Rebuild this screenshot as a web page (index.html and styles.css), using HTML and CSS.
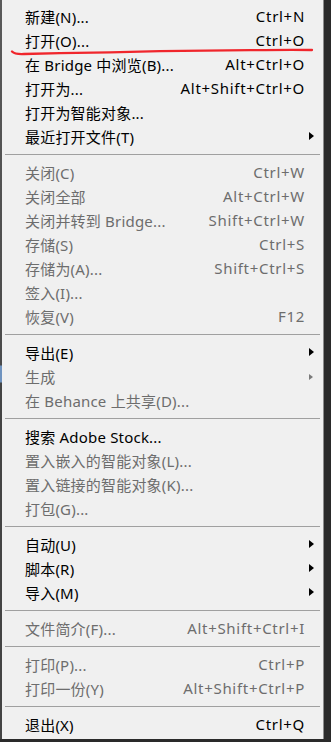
FILE: index.html
```html
<!DOCTYPE html>
<html lang="zh-CN">
<head>
<meta charset="utf-8">
<title>文件菜单</title>
<link rel="stylesheet" href="styles.css">
</head>
<body>
<div class="screen">
  <div class="edge-left"></div>
  <div class="menu">
    <div class="row"><span class="label">新建(N)...</span><span class="key">Ctrl+N</span><span class="sub"></span></div>
    <div class="row"><span class="label">打开(O)...</span><span class="key">Ctrl+O</span><span class="sub"></span></div>
    <div class="row"><span class="label">在 Bridge 中浏览(B)...</span><span class="key">Alt+Ctrl+O</span><span class="sub"></span></div>
    <div class="row"><span class="label">打开为...</span><span class="key">Alt+Shift+Ctrl+O</span><span class="sub"></span></div>
    <div class="row"><span class="label">打开为智能对象...</span><span class="key"></span><span class="sub"></span></div>
    <div class="row"><span class="label">最近打开文件(T)</span><span class="key"></span><span class="sub"><i class="arrow"></i></span></div>
    <div class="sep"></div>
    <div class="row off"><span class="label">关闭(C)</span><span class="key">Ctrl+W</span><span class="sub"></span></div>
    <div class="row off"><span class="label">关闭全部</span><span class="key">Alt+Ctrl+W</span><span class="sub"></span></div>
    <div class="row off"><span class="label">关闭并转到 Bridge...</span><span class="key">Shift+Ctrl+W</span><span class="sub"></span></div>
    <div class="row off"><span class="label">存储(S)</span><span class="key">Ctrl+S</span><span class="sub"></span></div>
    <div class="row off"><span class="label">存储为(A)...</span><span class="key">Shift+Ctrl+S</span><span class="sub"></span></div>
    <div class="row off"><span class="label">签入(I)...</span><span class="key"></span><span class="sub"></span></div>
    <div class="row off"><span class="label">恢复(V)</span><span class="key">F12</span><span class="sub"></span></div>
    <div class="sep"></div>
    <div class="row"><span class="label">导出(E)</span><span class="key"></span><span class="sub"><i class="arrow"></i></span></div>
    <div class="row off"><span class="label">生成</span><span class="key"></span><span class="sub"><i class="arrow small"></i></span></div>
    <div class="row off"><span class="label">在 Behance 上共享(D)...</span><span class="key"></span><span class="sub"></span></div>
    <div class="sep"></div>
    <div class="row"><span class="label">搜索 Adobe Stock...</span><span class="key"></span><span class="sub"></span></div>
    <div class="row off"><span class="label">置入嵌入的智能对象(L)...</span><span class="key"></span><span class="sub"></span></div>
    <div class="row off"><span class="label">置入链接的智能对象(K)...</span><span class="key"></span><span class="sub"></span></div>
    <div class="row off"><span class="label">打包(G)...</span><span class="key"></span><span class="sub"></span></div>
    <div class="sep"></div>
    <div class="row"><span class="label">自动(U)</span><span class="key"></span><span class="sub"><i class="arrow"></i></span></div>
    <div class="row"><span class="label">脚本(R)</span><span class="key"></span><span class="sub"><i class="arrow"></i></span></div>
    <div class="row"><span class="label">导入(M)</span><span class="key"></span><span class="sub"><i class="arrow"></i></span></div>
    <div class="sep"></div>
    <div class="row off"><span class="label">文件简介(F)...</span><span class="key">Alt+Shift+Ctrl+I</span><span class="sub"></span></div>
    <div class="sep"></div>
    <div class="row off"><span class="label">打印(P)...</span><span class="key">Ctrl+P</span><span class="sub"></span></div>
    <div class="row off"><span class="label">打印一份(Y)</span><span class="key">Alt+Shift+Ctrl+P</span><span class="sub"></span></div>
    <div class="sep"></div>
    <div class="row"><span class="label">退出(X)</span><span class="key">Ctrl+Q</span><span class="sub"></span></div>
  </div>
</div>
<svg class="mark" width="331" height="742" viewBox="0 0 331 742" aria-hidden="true">
  <path d="M12 51.5 Q15 54.5 24 54 L60 53.2 Q110 52.6 160 51.2 L250 50.2 Q290 49.6 312 50" fill="none" stroke="#f0262c" stroke-width="2.3" stroke-linecap="round"/>
</svg>
</body>
</html>
```

FILE: styles.css
```css
html, body {
  margin: 0;
  padding: 0;
}
body {
  width: 331px;
  height: 742px;
  overflow: hidden;
  background: #2a2a2a;
  font-family: "Noto Sans", "Noto Sans CJK SC", sans-serif;
  font-size: 15px;
  position: relative;
}
.screen {
  display: flex;
  align-items: flex-start;
  height: 742px;
}
.edge-left {
  width: 2px;
  height: 739px;
  background: linear-gradient(#5a5a5a 0, #4a4a4a 365px, #6f93bf 366px, #6f93bf 382px, #444 383px);
}
.menu {
  width: 322px;
  height: 739px;
  box-sizing: border-box;
  background: #f0f0f0;
  border-right: 1px solid #8c8c8c;
  padding-top: 4px;
}
.row {
  display: flex;
  align-items: center;
  height: 24px;
  padding-left: 23px;
  color: #000;
  white-space: nowrap;
  letter-spacing: 0.2px;
}
.row.off {
  color: #6d6d6d;
}
.label {
  flex: 1;
}
.key {
  text-align: right;
  letter-spacing: 0.7px;
}
.sub {
  width: 18px;
  display: flex;
  align-items: center;
  padding-left: 4px;
  box-sizing: border-box;
}
.arrow {
  display: block;
  width: 0;
  height: 0;
  border-top: 4px solid transparent;
  border-bottom: 4px solid transparent;
  border-left: 5px solid #000;
}
.arrow.small {
  border-top-width: 3px;
  border-bottom-width: 3px;
  border-left: 4px solid #7a7a7a;
  margin-top: 2px;
}
.sep {
  height: 1px;
  background: #a0a0a0;
  margin: 6px 3px 5px 3px;
}
.mark {
  position: absolute;
  left: 0;
  top: 0;
  pointer-events: none;
}
```
